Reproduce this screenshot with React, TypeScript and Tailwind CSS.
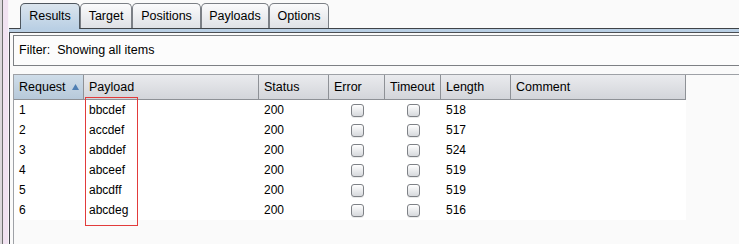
import React from "react";

const tabs = [
  { label: "Results", w: "w-[60px]", active: true },
  { label: "Target", w: "w-[52px]", active: false },
  { label: "Positions", w: "w-[69px]", active: false },
  { label: "Payloads", w: "w-[68px]", active: false },
  { label: "Options", w: "w-[60px]", active: false },
];

const columns = [
  { label: "Request", w: "w-[70px]" },
  { label: "Payload", w: "w-[175px]" },
  { label: "Status", w: "w-[70px]" },
  { label: "Error", w: "w-[56px]" },
  { label: "Timeout", w: "w-[56px]" },
  { label: "Length", w: "w-[70px]" },
  { label: "Comment", w: "w-[175px]" },
];

const rows = [
  { id: 1, payload: "bbcdef", status: 200, length: 518 },
  { id: 2, payload: "accdef", status: 200, length: 517 },
  { id: 3, payload: "abddef", status: 200, length: 524 },
  { id: 4, payload: "abceef", status: 200, length: 519 },
  { id: 5, payload: "abcdff", status: 200, length: 519 },
  { id: 6, payload: "abcdeg", status: 200, length: 516 },
];

function Checkbox() {
  return (
    <span className="block h-[13px] w-[13px] rounded-[3px] border border-[#7e8186] bg-gradient-to-b from-[#ffffff] to-[#d6d8dc] shadow-[0_1px_0_rgba(0,0,0,0.08)]" />
  );
}

function SortArrow() {
  return (
    <svg width="7" height="6" viewBox="0 0 7 6" className="ml-[6px]">
      <path d="M3.5 0 L7 6 L0 6 Z" fill="#4f7fb3" />
    </svg>
  );
}

export default function App() {
  return (
    <div className="flex h-[244px] w-[739px] overflow-hidden bg-[#fafafa] font-['Liberation_Sans',Arial,sans-serif] text-[12px] text-black">
      {/* left edge of the neighbouring pane */}
      <div className="flex w-[9px] shrink-0">
        <div className="w-[2px] bg-[#dcd8dc]" />
        <div className="w-px bg-[#6e6e6e]" />
        <div className="w-[5px] bg-[#f1e2f1]" />
        <div className="w-px bg-[#faf5fa]" />
      </div>

      <div className="flex min-w-0 flex-1 flex-col">
        {/* tab strip */}
        <div className="flex h-[29px] shrink-0 items-end border-b border-[#3f4347] pl-[11px] pt-[3px]">
          {tabs.map((tab) =>
            tab.active ? (
              <div
                key={tab.label}
                className={`relative z-10 -mb-px flex h-[26px] ${tab.w} items-center justify-center rounded-t-[5px] border border-b-0 border-[#4e565e] bg-gradient-to-b from-[#dbe5ee] to-[#b9cfe4] pb-px text-[12.5px]`}
              >
                {tab.label}
              </div>
            ) : (
              <div
                key={tab.label}
                className={`flex h-[25px] ${tab.w} items-center justify-center rounded-t-[5px] border border-b-0 border-[#7b7f85] bg-gradient-to-b from-[#fbfbfc] to-[#dfe1e5] text-[12.5px]`}
              >
                {tab.label}
              </div>
            )
          )}
        </div>
        <div className="h-[3px] shrink-0 bg-[#b9cfe4]" />
        <div className="h-px shrink-0 bg-[#4a4e53]" />

        {/* tab content */}
        <div className="flex flex-1 flex-col border-l border-[#44484c] pl-[3px] pt-[2px]">
          <div className="flex h-[31px] shrink-0 items-center whitespace-pre border border-r-0 border-[#7d8084] bg-[#fcfcfc] pl-[5px] text-[12.5px]">
            Filter:  Showing all items
          </div>

          <div className="relative mt-[8px] flex-1 border-l border-t border-[#9ea1a6]">
            {/* header */}
            <div className="flex h-[25px]">
              {columns.map((col, i) => (
                <div
                  key={col.label}
                  className={`flex ${col.w} items-center border-b border-r border-[#8e9196] pl-[5px] text-[12.5px] ${
                    i === 0
                      ? "bg-gradient-to-b from-[#cfdde9] to-[#b7c9da]"
                      : "bg-gradient-to-b from-[#eaebee] to-[#d3d5da]"
                  }`}
                >
                  {col.label}
                  {i === 0 && <SortArrow />}
                </div>
              ))}
            </div>

            {/* rows */}
            <div className="w-[672px] bg-white">
              {rows.map((row) => (
                <div key={row.id} className="flex h-[20px] items-center">
                  <div className="w-[70px] pl-[5px]">{row.id}</div>
                  <div className="w-[175px] pl-[5px]">{row.payload}</div>
                  <div className="w-[70px] pl-[5px]">{row.status}</div>
                  <div className="flex w-[56px] justify-center">
                    <Checkbox />
                  </div>
                  <div className="flex w-[56px] justify-center">
                    <Checkbox />
                  </div>
                  <div className="w-[70px] pl-[5px]">{row.length}</div>
                  <div className="w-[175px]" />
                </div>
              ))}
            </div>

            {/* red highlight around the payload column */}
            <div className="pointer-events-none absolute left-[71px] top-[22px] h-[129px] w-[53px] border border-[#e23b3b]" />
          </div>
        </div>
      </div>
    </div>
  );
}
